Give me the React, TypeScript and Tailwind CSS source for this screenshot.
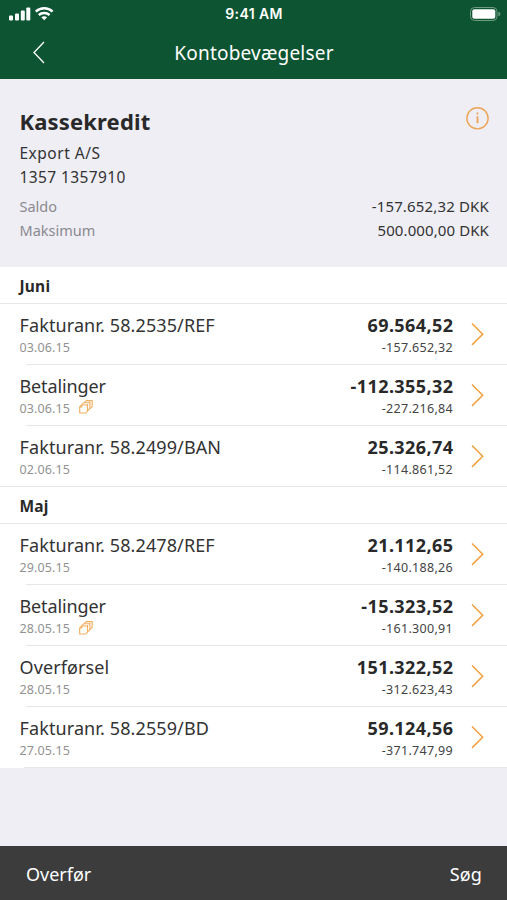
type Entry = { name: string; nameClass: string; date: string; amount: string; balance: string; stacked?: boolean };

const WIDE = "tracking-[0.11px]";
const TIGHT = "tracking-[-0.12px]";

const june: Entry[] = [
  { name: "Fakturanr. 58.2535/REF", nameClass: WIDE, date: "03.06.15", amount: "69.564,52", balance: "-157.652,32" },
  { name: "Betalinger", nameClass: TIGHT, date: "03.06.15", amount: "-112.355,32", balance: "-227.216,84", stacked: true },
  { name: "Fakturanr. 58.2499/BAN", nameClass: WIDE, date: "02.06.15", amount: "25.326,74", balance: "-114.861,52" },
];

const may: Entry[] = [
  { name: "Fakturanr. 58.2478/REF", nameClass: WIDE, date: "29.05.15", amount: "21.112,65", balance: "-140.188,26" },
  { name: "Betalinger", nameClass: TIGHT, date: "28.05.15", amount: "-15.323,52", balance: "-161.300,91", stacked: true },
  { name: "Overførsel", nameClass: WIDE, date: "28.05.15", amount: "151.322,52", balance: "-312.623,43" },
  { name: "Fakturanr. 58.2559/BD", nameClass: WIDE, date: "27.05.15", amount: "59.124,56", balance: "-371.747,99" },
];

function StackIcon() {
  return (
    <svg className="-mt-[3px] ml-[9px] h-[14px] w-[14px]" viewBox="0 0 14 14" fill="none" stroke="#f3ad5c" strokeWidth="1.1" strokeLinejoin="round">
      <path d="M0.7 7 L2.7 5 H8.5 V11 L6.8 13 H0.7 Z" />
      <path d="M3.2 5 V4.4 L5 2.7 H10.9 V8.6 L8.5 10.8" />
      <path d="M5.6 2.7 V2.2 L7.3 0.6 H13.2 V6.4 L10.9 8.6" />
      <path d="M0.7 7 H2.7 V5 M8.1 4.6 H9.2 M10.3 2.4 H11.4" />
    </svg>
  );
}

function Row({ entry, lineClass }: { entry: Entry; lineClass: string }) {
  return (
    <li className="relative flex h-[61.1px] bg-white pl-[19.5px] pr-[23px]">
      <div className="flex flex-1 flex-col">
        <span className={`mt-[9px] whitespace-nowrap text-[18px] leading-6 text-[#333] ${entry.nameClass}`}>{entry.name}</span>
        <span className="mt-[3px] flex h-4 items-center text-[12.5px] leading-4 tracking-[0.1px] text-[#929292]">
          {entry.date}
          {entry.stacked && <StackIcon />}
        </span>
      </div>
      <div className="flex flex-col items-end">
        <span className="-mr-[0.5px] mt-[9px] text-[18px] font-bold leading-6 tracking-[0.42px] text-[#292929]">{entry.amount}</span>
        <span className="mt-[3px] text-[12.5px] leading-4 tracking-[0.3px] text-[#444]">{entry.balance}</span>
      </div>
      <svg className="ml-[18px] mt-[19px] h-6 w-[13px]" viewBox="0 0 13 24" fill="none" stroke="#f2a040" strokeWidth="1.5">
        <path d="M1 0.5 L11.7 11.2 L1 21.9" />
      </svg>
      <span className={`absolute bottom-0 right-0 h-px bg-[#e6e6e8] ${lineClass}`} />
    </li>
  );
}

function Month({ title, entries, lastLine }: { title: string; entries: Entry[]; lastLine: string }) {
  return (
    <section>
      <h2 className="flex h-[36.9px] items-center border-b border-[#e8e8ea] bg-white pl-[19.5px] pt-[3px] text-[15.5px] font-bold tracking-[0.2px] text-[#292929]">
        {title}
      </h2>
      <ul>
        {entries.map((e, i) => (
          <Row key={i} entry={e} lineClass={i === entries.length - 1 ? lastLine : "left-[26px]"} />
        ))}
      </ul>
    </section>
  );
}

export default function App() {
  return (
    <div className="flex h-[900px] w-[507px] flex-col overflow-hidden bg-[#efeef5] font-['Noto_Sans','Open_Sans',sans-serif]">
      <header className="h-[79px] shrink-0 bg-[#0c5432] text-white">
        <div className="flex h-[27px] items-center pl-[9px] pr-[6px]">
          <div className="flex flex-1 items-center">
            <svg className="h-[14px] w-[46px]" viewBox="0 0 46 14" fill="white">
              <rect x="0" y="8.5" width="4" height="5" rx="1" />
              <rect x="6" y="6.5" width="4" height="7" rx="1" />
              <rect x="11.8" y="3.5" width="4" height="10" rx="1" />
              <rect x="17.3" y="0.5" width="4" height="13" rx="1" />
              <g fill="none" stroke="white" strokeWidth="2.4">
                <path d="M26.8 4.6 C31.5 0.1 38.9 0.1 43.6 4.6" />
                <path d="M29.8 8 C32.8 5.3 37.6 5.3 40.6 8" />
              </g>
              <path d="M32.3 10.2 C33.9 8.9 36.5 8.9 38.1 10.2 L35.2 13.2 Z" />
            </svg>
          </div>
          <span className="mr-[2px] font-['Inter',sans-serif] text-[14px] font-semibold leading-4 tracking-[0.4px]">9:41 AM</span>
          <div className="flex flex-1 justify-end">
            <svg className="h-[14px] w-[31px]" viewBox="0 0 31 14">
              <rect x="0.5" y="0.5" width="26.5" height="13" rx="4" fill="none" stroke="#6f9a83" />
              <rect x="2.3" y="2.2" width="23" height="9.6" rx="2" fill="white" />
              <path d="M28.4 4.8 C31 5.5 31 8.5 28.4 9.2 Z" fill="#6f9a83" />
            </svg>
          </div>
        </div>
        <div className="flex h-[52px] items-center">
          <svg className="ml-8 h-6 w-[13px]" viewBox="0 0 13 24" fill="none" stroke="white" strokeWidth="1.3">
            <path d="M12 1 L2 11.5 L12 22" />
          </svg>
          <h1 className="flex-1 pr-[44px] text-center text-[19px] leading-6 tracking-[0.2px]">Kontobevægelser</h1>
        </div>
      </header>

      <section className="flex h-[188px] shrink-0 flex-col pl-[19.5px] pr-[18px] text-[15.5px] text-[#333]">
        <div className="flex justify-between pt-[27px]">
          <h2 className="text-[22px] font-bold leading-[30px] tracking-[0.15px] text-[#292929]">Kassekredit</h2>
          <svg className="h-6 w-6" viewBox="0 0 24 24" fill="none" stroke="#eca457">
            <circle cx="12.5" cy="12.3" r="10.6" strokeWidth="1.4" />
            <path d="M12.5 10.2 V17.3 M12.5 6.5 V8.5" strokeWidth="1.8" />
          </svg>
        </div>
        <p className="mt-[5px] leading-6 tracking-[0.5px]">Export A/S</p>
        <p className="leading-6 tracking-[0.4px]">1357 1357910</p>
        <div className="mt-[5px] flex justify-between text-[15px] leading-6">
          <span className="text-[14.5px] text-[#8a8a8f]">Saldo</span>
          <span className="tracking-[0.16px]">-157.652,32 DKK</span>
        </div>
        <div className="flex justify-between text-[15px] leading-[25px]">
          <span className="text-[14.5px] text-[#8a8a8f]">Maksimum</span>
          <span className="tracking-[0.1px]">500.000,00 DKK</span>
        </div>
      </section>

      <main className="flex-1">
        <Month title="Juni" entries={june} lastLine="left-0" />
        <Month title="Maj" entries={may} lastLine="left-6" />
      </main>

      <footer className="flex h-[54px] shrink-0 items-center justify-between bg-[#3c3c3c] pl-[26px] pr-[25px] pt-[3px] text-[18px] text-white">
        <span>Overfør</span>
        <span className="tracking-[0.1px]">Søg</span>
      </footer>
    </div>
  );
}
